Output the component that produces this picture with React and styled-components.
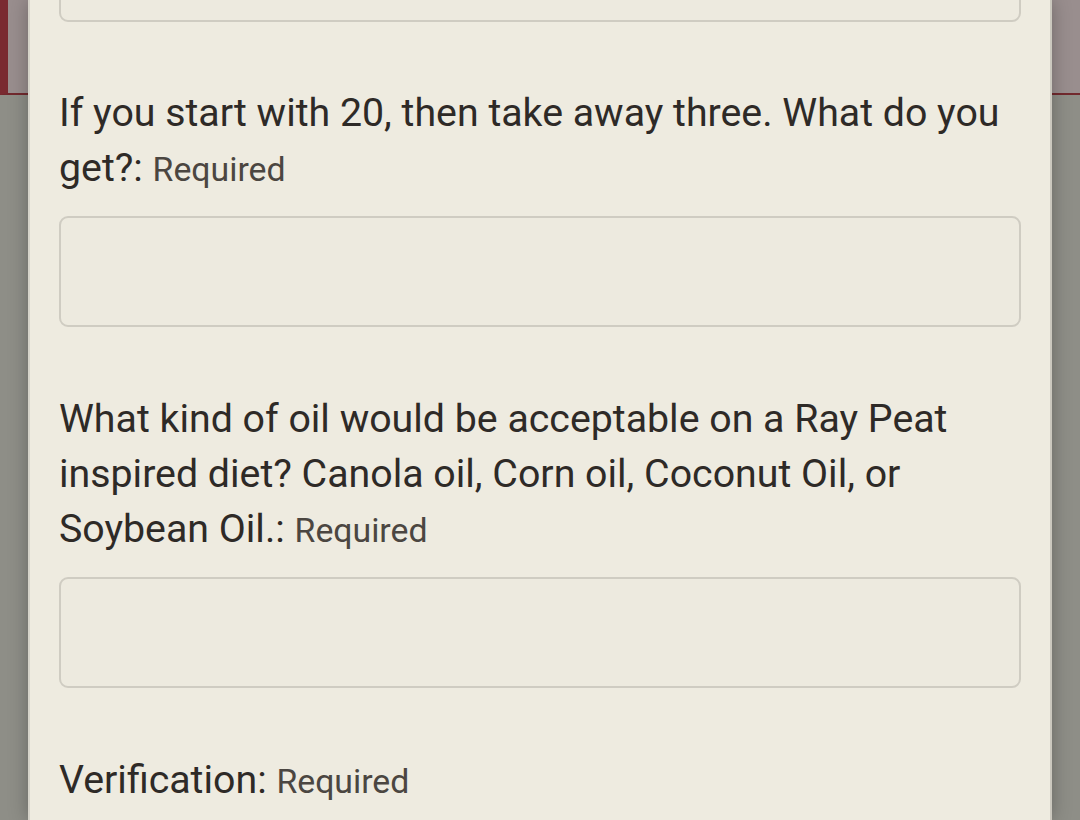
import React from 'react';
import styled, { createGlobalStyle } from 'styled-components';

const GlobalStyle = createGlobalStyle`
  html, body {
    margin: 0;
    padding: 0;
    height: 100%;
    overflow: hidden;
  }
  body {
    font-family: Roboto, "Liberation Sans", sans-serif;
  }
`;

const Page = styled.div`
  position: relative;
  height: 820px;
  width: 1080px;
  overflow: hidden;
  background: #8e8e87;
`;

const HeaderBand = styled.div`
  height: 93px;
  background: #998e8e;
  border-left: 8px solid #7a2a31;
  border-bottom: 2px solid #72292e;
`;

const Modal = styled.div`
  position: absolute;
  top: 0;
  bottom: 0;
  left: 28px;
  width: 1024px;
  box-sizing: border-box;
  background: #eeebe0;
  border-left: 2px solid #d6d3c9;
  border-right: 2px solid #cbc8be;
  box-shadow: 0 0 18px rgba(0, 0, 0, 0.28);
  overflow: hidden;
`;

const Form = styled.form`
  display: flex;
  flex-direction: column;
  margin-top: -89px;
  padding: 0 29px;
`;

const Field = styled.div`
  display: flex;
  flex-direction: column;
  margin-bottom: ${p => (p.$first ? '64px' : '65px')};
`;

const Label = styled.label`
  font-size: 39.3px;
  line-height: 55px;
  color: #2e2a27;
  margin-bottom: 20px;
`;

const Required = styled.span`
  font-size: 33.8px;
  line-height: 1;
  color: #4b4641;
`;

const TextInput = styled.input`
  display: block;
  box-sizing: border-box;
  width: 100%;
  height: 111px;
  margin: 0;
  padding: 0 20px;
  background: #edeadf;
  border: 2px solid #cfccc2;
  border-radius: 9px;
  font-size: 36px;
  font-family: inherit;
  outline: none;
`;

const questions = [
  { id: 'q1', text: 'If you start with 20, then take away three. What do you get?:' },
  {
    id: 'q2',
    text:
      'What kind of oil would be acceptable on a Ray Peat inspired diet? Canola oil, Corn oil, Coconut Oil, or Soybean Oil.:'
  }
];

export default function App() {
  return (
    <>
      <GlobalStyle />
      <Page>
        <HeaderBand />
        <Modal>
          <Form>
            <Field $first>
              <TextInput type="text" aria-label="previous field" />
            </Field>
            {questions.map(q => (
              <Field key={q.id}>
                <Label htmlFor={q.id}>
                  {q.text} <Required>Required</Required>
                </Label>
                <TextInput id={q.id} type="text" />
              </Field>
            ))}
            <Field>
              <Label>
                Verification: <Required>Required</Required>
              </Label>
            </Field>
          </Form>
        </Modal>
      </Page>
    </>
  );
}
